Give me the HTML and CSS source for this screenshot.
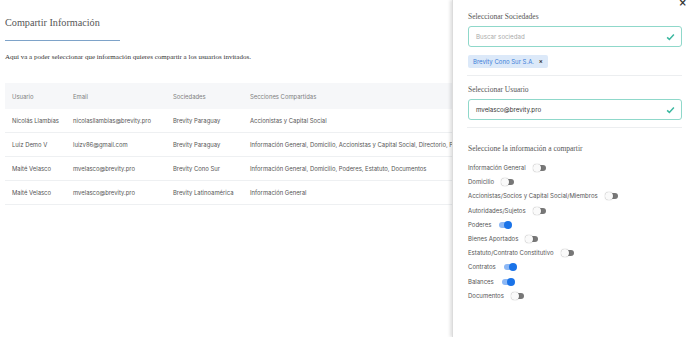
FILE: index.html
```html
<!DOCTYPE html>
<html lang="es">
<head>
  <meta charset="UTF-8" />
  <title>Compartir Información</title>
  <link rel="stylesheet" href="styles.css">
</head>
<body>
  <div class="page">
    <h1 class="title">Compartir Información</h1>
    <p class="intro">Aquí va a poder seleccionar que información quieres compartir a los usuarios invitados.</p>

    <table class="table">
      <thead>
        <tr>
          <th class="col-user">Usuario</th>
          <th class="col-mail">Email</th>
          <th class="col-soc">Sociedades</th>
          <th>Secciones Compartidas</th>
        </tr>
      </thead>
      <tbody>
        <tr>
          <td>Nicolás Llambías</td>
          <td>nicolasllambias@brevity.pro</td>
          <td>Brevity Paraguay</td>
          <td>Accionistas y Capital Social</td>
        </tr>
        <tr>
          <td>Luiz Demo V</td>
          <td>luizv86@gmail.com</td>
          <td>Brevity Paraguay</td>
          <td>Información General, Domicilio, Accionistas y Capital Social, Directorio, Poderes, Estatuto</td>
        </tr>
        <tr>
          <td>Maité Velasco</td>
          <td>mvelasco@brevity.pro</td>
          <td>Brevity Cono Sur</td>
          <td>Información General, Domicilio, Poderes, Estatuto, Documentos</td>
        </tr>
        <tr>
          <td>Maité Velasco</td>
          <td>mvelasco@brevity.pro</td>
          <td>Brevity Latinoamérica</td>
          <td>Información General</td>
        </tr>
      </tbody>
    </table>
  </div>

  <!-- Panel lateral -->
  <aside class="panel">
    <span class="close">×</span>

    <div class="block first">
      <h3 class="label">Seleccionar Sociedades</h3>
      <div class="field">
        <span class="placeholder">Buscar sociedad</span>
        <svg class="check" viewBox="0 0 12 10"><path d="M1.5 5.5 L4.5 8.2 L10.5 1.8" /></svg>
      </div>
      <span class="chip">Brevity Cono Sur S.A. <b>×</b></span>
    </div>

    <div class="block">
      <h3 class="label">Seleccionar Usuario</h3>
      <div class="field">
        <span class="value">mvelasco@brevity.pro</span>
        <svg class="check" viewBox="0 0 12 10"><path d="M1.5 5.5 L4.5 8.2 L10.5 1.8" /></svg>
      </div>
    </div>

    <div class="options">
      <h3 class="label">Seleccione la información a compartir</h3>
      <div class="option">Información General <span class="switch"></span></div>
      <div class="option">Domicilio <span class="switch"></span></div>
      <div class="option">Accionistas/Socios y Capital Social/Miembros <span class="switch"></span></div>
      <div class="option">Autoridades/Sujetos <span class="switch"></span></div>
      <div class="option">Poderes <span class="switch on"></span></div>
      <div class="option">Bienes Aportados <span class="switch"></span></div>
      <div class="option">Estatuto/Contrato Constitutivo <span class="switch"></span></div>
      <div class="option">Contratos <span class="switch on"></span></div>
      <div class="option">Balances <span class="switch on"></span></div>
      <div class="option">Documentos <span class="switch"></span></div>
    </div>
  </aside>
</body>
</html>
```

FILE: styles.css
```css
body {
  margin: 0;
  font-family: "Liberation Serif", serif;
  background-color: #fff;
  color: #444;
  height: 337px;
  overflow: hidden;
}
.page {
  padding: 17px 0 0 5px;
  width: 900px;
}
.title {
  font-weight: normal;
  font-size: 10.2px;
  color: #555;
  margin: 0;
  padding-bottom: 12px;
  width: 115px;
  border-bottom: 1px solid #7ea3c9;
  white-space: nowrap;
}
.intro {
  font-size: 7px;
  color: #333;
  margin: 12px 0 22px;
}
.table {
  border-collapse: collapse;
  font-family: "Inter", sans-serif;
  font-size: 5.9px;
  width: 860px;
}
.table th {
  background-color: #f6f7f9;
  color: #808080;
  font-weight: normal;
  text-align: left;
  height: 26px;
  padding: 0 0 0 7px;
}
.table td {
  color: #555;
  height: 23px;
  padding: 0 0 0 7px;
  border-bottom: 1px solid #eef0f2;
  white-space: nowrap;
}
.col-user { width: 54px; }
.col-mail { width: 93px; }
.col-soc { width: 70px; }

.panel {
  position: absolute;
  top: 0;
  right: 0;
  width: 215px;
  height: 337px;
  padding: 0 6px 0 14px;
  background: #fff;
  border-left: 1px solid #dcdcdc;
  box-shadow: -2px 0 3px rgba(0, 0, 0, 0.12);
}
.close {
  position: absolute;
  top: -1px;
  right: 1px;
  font-family: "DejaVu Sans", sans-serif;
  font-size: 10px;
  line-height: 8px;
  font-weight: bold;
  color: #333;
}
.block {
  border-bottom: 1px solid #eceef0;
  padding: 9px 0 7px 1px;
}
.block.first {
  padding-top: 12px;
}
.label {
  font-weight: normal;
  font-size: 7.5px;
  line-height: 9px;
  color: #555;
  margin: 0 0 5px;
}
.field {
  display: flex;
  align-items: center;
  justify-content: space-between;
  height: 19px;
  padding: 0 6px 0 7px;
  border: 1px solid #8fd8ca;
  border-radius: 3px;
  font-family: "Inter", sans-serif;
  font-size: 6.2px;
}
.placeholder { color: #aaa; }
.value { color: #333; }
.check {
  width: 9px;
  height: 8px;
}
.check path {
  fill: none;
  stroke: #3cb8a0;
  stroke-width: 2;
}
.chip {
  display: inline-block;
  margin-top: 8px;
  padding: 3px 5px;
  background-color: #dce9f9;
  color: #3b7dd8;
  border-radius: 2px;
  font-family: "Inter", sans-serif;
  font-size: 6px;
}
.chip b {
  color: #333;
  margin-left: 3px;
}
.options {
  padding: 16px 0 0 1px;
}
.options .label {
  margin-bottom: 8px;
}
.option {
  display: flex;
  align-items: center;
  gap: 8px;
  height: 14.2px;
  line-height: 8px;
  font-family: "Inter", sans-serif;
  font-size: 6px;
  color: #555;
}
.switch {
  position: relative;
  width: 12px;
  height: 6px;
  border-radius: 3px;
  background-color: #777;
}
.switch::after {
  content: "";
  position: absolute;
  left: -1px;
  top: -1px;
  width: 8px;
  height: 8px;
  border-radius: 50%;
  background-color: #fafafa;
  box-shadow: 0 0 1px rgba(0, 0, 0, 0.5);
}
.switch.on {
  background-color: #8db8f5;
}
.switch.on::after {
  left: 5px;
  background-color: #1a73e8;
  box-shadow: none;
}
```
